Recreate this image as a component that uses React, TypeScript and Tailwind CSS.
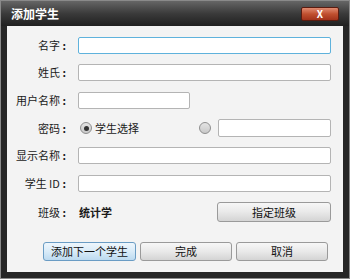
import React from "react";

const font = { fontFamily: '"Noto Sans CJK SC", "Liberation Sans", sans-serif' };

const Label = ({ text }: { text: string }) => (
  <div className="w-[59px] shrink-0 text-right text-[11px] leading-none text-[#1a1a1a] whitespace-pre">
    {text}
    <span className="font-bold"> :</span>
  </div>
);

const Input = ({ w, focus }: { w: string; focus?: boolean }) => (
  <div
    className={`${w} h-[17px] rounded-[2px] border bg-white ${
      focus ? "border-[#5fb2dc]" : "border-[#b4b4b4]"
    }`}
  />
);

const Btn = ({ text, w, h, primary }: { text: string; w: string; h: string; primary?: boolean }) => (
  <button
    className={`${w} ${h} flex items-center justify-center rounded-[3px] border text-[11px] leading-none text-[#111] ${
      primary
        ? "border-[#6a9cc4] bg-gradient-to-b from-[#eef6fc] via-[#d9ebf8] to-[#bcdaf0]"
        : "border-[#9a9a9a] bg-gradient-to-b from-[#f7f7f7] via-[#e9e9e9] to-[#d4d4d4]"
    }`}
  >
    {text}
  </button>
);

const Radio = ({ checked }: { checked?: boolean }) => (
  <div className="w-[12px] h-[12px] rounded-full border border-[#8e8e8e] bg-gradient-to-b from-[#e4e4e4] to-[#c9c9c9] flex items-center justify-center">
    {checked && <div className="w-[5px] h-[5px] rounded-full bg-[#333]" />}
  </div>
);

export default function App() {
  return (
    <div style={font} className="w-[350px] h-[279px] flex flex-col bg-[#262626] border border-[#8a8a8a]">
      {/* title bar */}
      <div className="h-[25px] shrink-0 flex items-center justify-between pl-[10px] pr-[10px] bg-gradient-to-b from-[#666] via-[#3b3b3b] to-[#202020]">
        <span className="text-white font-bold text-[12px] leading-none">添加学生</span>
        <div className="w-[38px] h-[14px] mt-[1px] flex items-center justify-center rounded-[2px] border border-[#5a1c10] bg-gradient-to-b from-[#e08a70] via-[#c0502f] to-[#a2321a] text-white font-bold text-[10px] leading-none">
          X
        </div>
      </div>

      {/* content */}
      <div className="mx-[6px] mb-[6px] flex-1 bg-[#f3f3f3] flex flex-col pr-[12px]">
        <div className="mt-[11px] flex items-center gap-[12px]">
          <Label text="名字" />
          <Input w="flex-1" focus />
        </div>
        <div className="mt-[10px] flex items-center gap-[12px]">
          <Label text="姓氏" />
          <Input w="flex-1" />
        </div>
        <div className="mt-[11px] flex items-center gap-[12px]">
          <Label text="用户名称" />
          <Input w="w-[112px]" />
        </div>
        <div className="mt-[10px] h-[18px] flex items-center gap-[12px]">
          <Label text="密码" />
          <div className="flex items-center flex-1">
            <div className="ml-[2px]">
              <Radio checked />
            </div>
            <span className="ml-[3px] text-[11px] leading-none text-[#1a1a1a]">学生选择</span>
            <div className="ml-[60px]">
              <Radio />
            </div>
            <div className="ml-[7px] flex-1 h-[18px] rounded-[2px] border border-[#b4b4b4] bg-white" />
          </div>
        </div>
        <div className="mt-[10px] flex items-center gap-[12px]">
          <Label text="显示名称" />
          <Input w="flex-1" />
        </div>
        <div className="mt-[11px] flex items-center gap-[12px]">
          <Label text="学生 ID" />
          <Input w="flex-1" />
        </div>
        <div className="mt-[10px] h-[20px] flex items-center gap-[12px]">
          <Label text="班级" />
          <span className="ml-[1px] font-bold text-[11px] leading-none text-[#1a1a1a]">统计学</span>
          <div className="ml-auto">
            <Btn text="指定班级" w="w-[114px]" h="h-[20px]" />
          </div>
        </div>
        <div className="mt-[20px] flex items-center gap-[4px] pl-[36px]">
          <Btn text="添加下一个学生" w="w-[93px]" h="h-[19px]" primary />
          <Btn text="完成" w="w-[92px]" h="h-[19px]" />
          <Btn text="取消" w="w-[92px]" h="h-[19px]" />
        </div>
      </div>
    </div>
  );
}
